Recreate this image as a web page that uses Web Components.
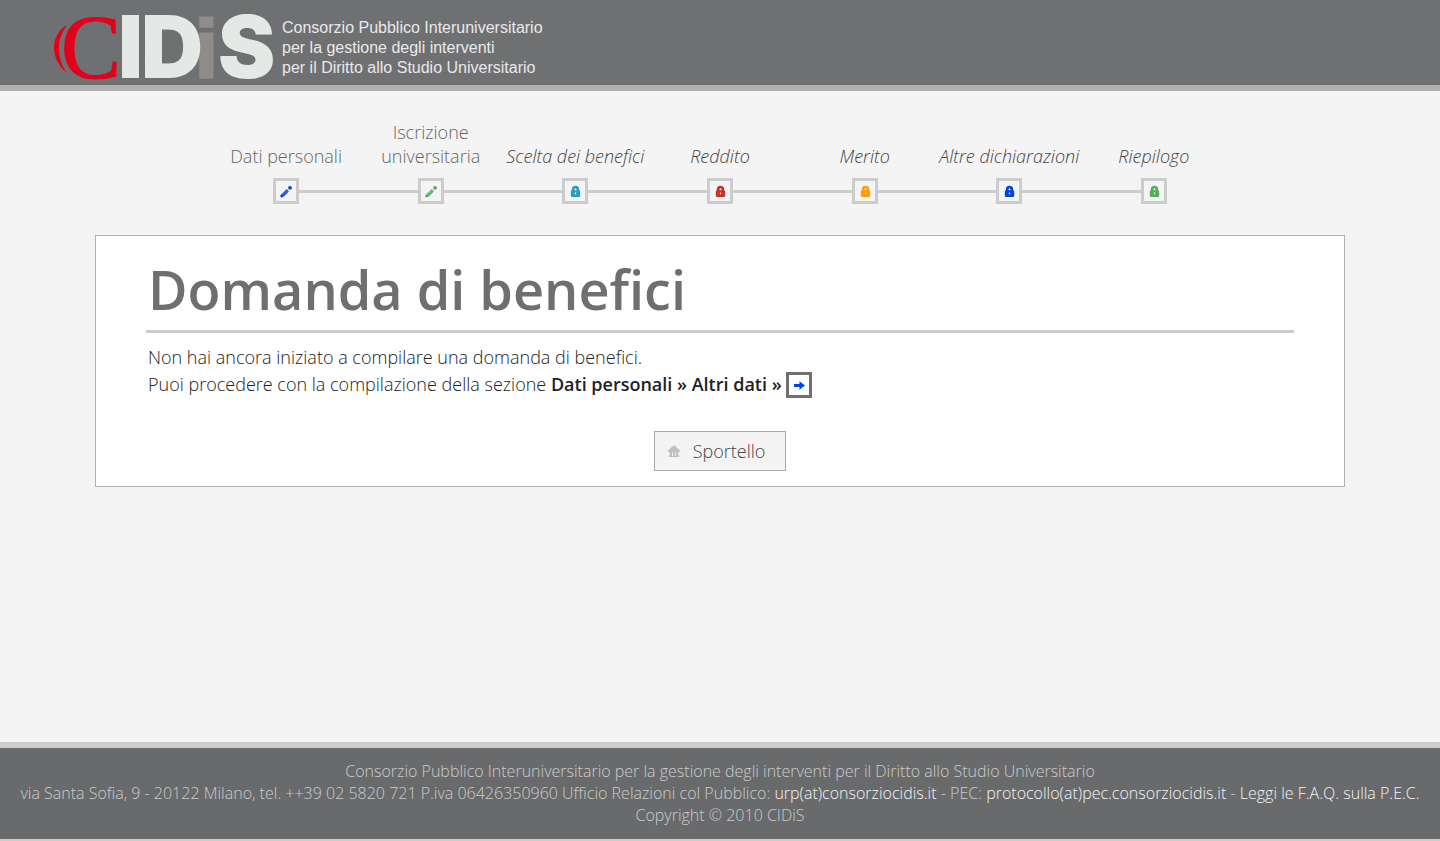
<!DOCTYPE html>
<html lang="it">
<head>
<meta charset="utf-8">
<title>CIDiS - Domanda di benefici</title>
<style>
  body {
    margin: 0;
    font-family: "Open Sans", sans-serif;
    font-weight: 300;
    font-size: 18px;
    color: #222;
    background: #f4f4f4;
  }
</style>
</head>
<body>
<cidis-app></cidis-app>

<script>
const define = (name, html) => {
  const template = document.createElement('template');
  template.innerHTML = html;
  customElements.define(name, class extends HTMLElement {
    constructor() {
      super();
      this.attachShadow({ mode: 'open' }).append(template.content.cloneNode(true));
    }
  });
};

const ICONS = {
  pencil: '<path d="M2.500 13l.6 1.300 2.600-.5 5.300-5.400-2.300-2.300-5.500 5.300z" opacity=".85"/><circle cx="3.700" cy="13" r="1.300"/><circle cx="12" cy="4.800" r="1.900"/>',
  lock: '<path fill-rule="evenodd" d="M4.800 7.300V6.500a3.700 3.700 0 0 1 7.400 0v.8c.6.300 1 .8 1 1.500v3.700c0 1-.6 1.600-1.600 1.600H5.400c-1 0-1.600-.6-1.600-1.600V8.800c0-.7.400-1.200 1-1.500zM7.600 7.300h1.800V6.200a.9.900 0 0 0-1.800 0zM7.900 9.500v1.800h1.200V9.500z"/>',
  arrow: '<path d="M3 7h5.500V4.200L14 8.500l-5.500 4.300V10H3z"/>',
  home: '<path d="M7 2l6.500 6-1 1H1.500l-1-1z"/><path fill-rule="evenodd" d="M2.700 8.500h8.600v4h1V14H1.700v-1.500h1zM5 9.500V13h1V9.500zM8 9.500V13h1V9.500z"/>'
};

/* Small monochrome icon: <cidis-icon name="lock"> */
customElements.define('cidis-icon', class extends HTMLElement {
  constructor() {
    super();
    this.attachShadow({ mode: 'open' });
  }
  connectedCallback() {
    this.shadowRoot.innerHTML = `
      <style>
        :host { display: block; width: 16px; height: 16px; }
        svg { display: block; fill: currentColor; }
      </style>
      <svg width="16" height="16" viewBox="0 0 16 16" aria-hidden="true">${ICONS[this.getAttribute('name')] || ''}</svg>`;
  }
});

define('cidis-header', `
  <style>
    :host { display: block; background: #6f7072; border-bottom: 6px solid #b1b0b0; }
    a { display: flex; align-items: center; gap: 6px; height: 85px; padding-left: 50px; color: #e9e9e9; text-decoration: none; }
    svg { display: block; flex: none; overflow: visible; }
    .mark { font-family: Inter, sans-serif; font-weight: 900; font-size: 86px; }
    .c { font-family: "Liberation Serif", serif; font-weight: 400; font-size: 90px; }
    .i { font-family: "Liberation Sans", sans-serif; font-weight: 700; font-size: 82px; }
    .tagline { font: 400 16px/20px "Liberation Sans", sans-serif; padding-top: 10px; }
    .tagline span { display: block; white-space: nowrap; }
  </style>
  <a href="#">
    <svg width="226" height="85" viewBox="0 0 226 85" role="img" aria-label="CIDiS">
      <path d="M17 25C8 30 4 39 4 47.500S8 66 17 73c-5-7-8-15-8-25s4-17 8-23z" fill="#e2001a"/>
      <text class="c" x="11" y="78" fill="#e2001a" stroke="#e2001a">C</text>
      <text class="i" x="145" y="77" fill="#8f8c89" stroke="#8f8c89" stroke-width="3">i</text>
      <g class="mark" fill="#e6e8e5">
        <text x="68" y="78">I</text>
        <text x="91" y="78">D</text>
        <text x="168" y="78">S</text>
      </g>
    </svg>
    <div class="tagline">
      <span>Consorzio Pubblico Interuniversitario</span>
      <span>per la gestione degli interventi</span>
      <span>per il Diritto allo Studio Universitario</span>
    </div>
  </a>`);

define('cidis-steps', `
  <style>
    :host { display: grid; grid-template-columns: repeat(7, 1fr); width: 81%; margin: 0 auto; }
  </style>
  <slot></slot>`);

/* One step of the form; the "locked" attribute marks a section that is not open yet. */
define('cidis-step', `
  <style>
    :host { display: flex; flex-direction: column; justify-content: flex-end; gap: 10px; min-width: 0; line-height: 24px; text-align: center; color: #666; }
    :host([locked]) { font-style: italic; color: #444; }
    .track { display: grid; grid-template-columns: 1fr auto 1fr; align-items: center; }
    .track::before, .track::after { content: ""; height: 3px; background: #ccc; }
    :host(:first-child) .track::before, :host(:last-child) .track::after { visibility: hidden; }
    .node { display: flex; padding: 2px; border: 3px solid #ccc; }
  </style>
  <div><slot></slot></div>
  <div class="track"><div class="node"><slot name="icon"></slot></div></div>`);

define('cidis-panel', `
  <style>
    :host { display: block; padding: 14px 50px 15px; border: 1px solid #b0b0b0; background: #fff; }
    h1 { margin: 0 0 11px; padding: 0 2px 2px; border-bottom: 3px solid #ccc; color: #6f6f6f; font-size: 54px; line-height: 78px; font-weight: 600; }
    .text { padding: 0 2px; line-height: 27px; }
    .actions { display: flex; justify-content: center; margin-top: 33px; }
  </style>
  <h1><slot name="title"></slot></h1>
  <div class="text"><slot></slot></div>
  <div class="actions"><slot name="actions"></slot></div>`);

define('cidis-next', `
  <style>
    :host { display: inline-block; vertical-align: bottom; }
    a { display: block; padding: 2px; border: 3px solid #6f6f6f; color: #0046dc; }
  </style>
  <a href="#" aria-label="Vai alla sezione"><cidis-icon name="arrow"></cidis-icon></a>`);

define('cidis-button', `
  <style>
    :host { display: block; }
    button { display: flex; align-items: center; gap: 10px; height: 40px; margin: 0; padding: 0 20px 0 12px; border: 1px solid #aaa; background: #f4f4f4; color: #444; font: inherit; }
    cidis-icon { color: #c0c0c0; }
  </style>
  <button type="button"><cidis-icon name="home"></cidis-icon><slot></slot></button>`);

define('cidis-footer', `
  <style>
    :host { display: block; padding: 12px 16px 13px; border-top: 6px solid #ccc; border-bottom: 2px solid #ccc; background: #696a6b; color: #ccc; font-size: 16px; line-height: 22px; text-align: center; }
    p { margin: 0; }
    a { color: #f4f4f4; text-decoration: none; }
  </style>
  <p>Consorzio Pubblico Interuniversitario per la gestione degli interventi per il Diritto allo Studio Universitario</p>
  <p>via Santa Sofia, 9 - 20122 Milano, tel. ++39 02 5820 721 P.iva 06426350960 Ufficio Relazioni col Pubblico: <a href="#">urp(at)consorziocidis.it</a> - PEC: <a href="#">protocollo(at)pec.consorziocidis.it</a> - <a href="#">Leggi le F.A.Q. sulla P.E.C.</a></p>
  <p>Copyright © 2010 CIDiS</p>`);

define('cidis-app', `
  <style>
    :host { display: flex; flex-direction: column; min-height: 100vh; }
    main { flex: 1; width: calc(100% - 64px); max-width: 1250px; margin: 0 auto; padding: 29px 0 32px; }
    cidis-panel { margin-top: 31px; }
    p { margin: 0; }
    strong { font-weight: 600; }
    .blue { color: #0046dc; }
    .green { color: #55ad58; }
    .cyan { color: #2d9dbd; }
    .red { color: #c8322e; }
    .orange { color: #ff9c0a; }
  </style>
  <cidis-header></cidis-header>
  <main>
    <cidis-steps>
      <cidis-step>Dati personali<cidis-icon slot="icon" class="blue" name="pencil"></cidis-icon></cidis-step>
      <cidis-step>Iscrizione universitaria<cidis-icon slot="icon" class="green" name="pencil"></cidis-icon></cidis-step>
      <cidis-step locked>Scelta dei benefici<cidis-icon slot="icon" class="cyan" name="lock"></cidis-icon></cidis-step>
      <cidis-step locked>Reddito<cidis-icon slot="icon" class="red" name="lock"></cidis-icon></cidis-step>
      <cidis-step locked>Merito<cidis-icon slot="icon" class="orange" name="lock"></cidis-icon></cidis-step>
      <cidis-step locked>Altre dichiarazioni<cidis-icon slot="icon" class="blue" name="lock"></cidis-icon></cidis-step>
      <cidis-step locked>Riepilogo<cidis-icon slot="icon" class="green" name="lock"></cidis-icon></cidis-step>
    </cidis-steps>
    <cidis-panel>
      <span slot="title">Domanda di benefici</span>
      <p>Non hai ancora iniziato a compilare una domanda di benefici.</p>
      <p>Puoi procedere con la compilazione della sezione <strong>Dati personali » Altri dati »</strong> <cidis-next></cidis-next></p>
      <cidis-button slot="actions">Sportello</cidis-button>
    </cidis-panel>
  </main>
  <cidis-footer></cidis-footer>`);
</script>
</body>
</html>
